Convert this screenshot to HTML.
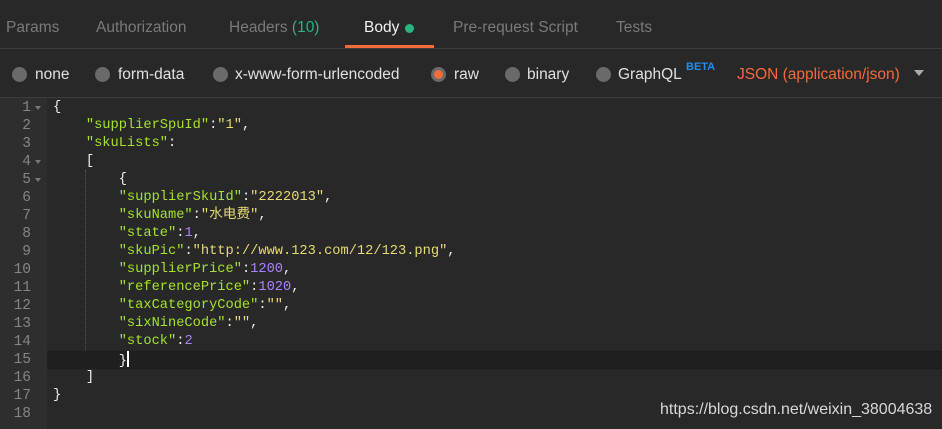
<!DOCTYPE html>
<html><head><meta charset="utf-8"><style>
*{margin:0;padding:0;box-sizing:border-box}
body{width:942px;height:429px;background:#282828;overflow:hidden;position:relative;font-family:"Liberation Sans","Noto Sans CJK SC",sans-serif}
.tabs{position:absolute;left:0;top:0;width:942px;height:49px;border-bottom:1px solid #3c3c3c;background:#282828}
.tab{position:absolute;top:19px;font-size:15.5px;color:#7a7a7a;white-space:nowrap}
.ul{position:absolute;left:345px;top:45px;width:89px;height:3px;background:#f26b3a}
.radios{position:absolute;left:0;top:49px;width:942px;height:49px;border-bottom:1px solid #3c3c3c}
.r{position:absolute;top:17px;font-size:15.5px;color:#e0e0e0;white-space:nowrap}
.dot{position:absolute;top:18px;width:15px;height:15px;border-radius:50%;background:#6a6a6a}
.gut{position:absolute;left:0;top:98px;width:47px;height:331px;background:#2e2e2e}
.code{position:absolute;left:0;top:99px;width:942px;font-family:"Liberation Mono","Noto Sans CJK SC",monospace;font-size:13.7px;line-height:18px}
.ln{height:18px;position:relative;white-space:pre}
.n{position:absolute;left:0;width:31px;text-align:right;color:#858585;font-size:14.5px}
.t{position:absolute;left:53px;color:#f0f0f0}
.k{color:#a6e22e}.s{color:#e6db74}.v{color:#ae81ff}
.fold{position:absolute;left:35px;top:7px;width:0;height:0;border-left:3.5px solid transparent;border-right:3.5px solid transparent;border-top:4px solid #777}
.guide{position:absolute;left:85px;top:170px;height:198px;border-left:1px dotted #555}
</style></head><body>
<div class="tabs">
<div class="tab" style="left:6px">Params</div>
<div class="tab" style="left:96px">Authorization</div>
<div class="tab" style="left:229px">Headers <span style="color:#26b47f">(10)</span></div>
<div class="tab" style="left:364px;color:#f0f0f0">Body</div>
<div style="position:absolute;left:405px;top:24px;width:9px;height:9px;border-radius:50%;background:#26b47f"></div>
<div class="tab" style="left:453px">Pre-request Script</div>
<div class="tab" style="left:616px">Tests</div>
<div class="ul"></div>
</div>
<div class="radios">
<div class="dot" style="left:12px"></div><div class="r" style="left:35px">none</div>
<div class="dot" style="left:95px"></div><div class="r" style="left:118px">form-data</div>
<div class="dot" style="left:213px"></div><div class="r" style="left:235px">x-www-form-urlencoded</div>
<div class="dot" style="left:431px;background:#f26b3a;border:3px solid #6a6a6a"></div><div class="r" style="left:454px">raw</div>
<div class="dot" style="left:505px"></div><div class="r" style="left:527px">binary</div>
<div class="dot" style="left:596px"></div><div class="r" style="left:618px">GraphQL</div>
<div style="position:absolute;left:686px;top:12px;font-size:11px;font-weight:bold;color:#1d8ff0">BETA</div>
<div class="r" style="left:737px;color:#f26b3a">JSON (application/json)</div>
<div style="position:absolute;left:914px;top:21px;border-left:5px solid transparent;border-right:5px solid transparent;border-top:6px solid #aaa"></div>
</div>
<div class="gut"></div>
<div class="guide"></div>
<div class="code">
<div class="ln"><span class="n">1</span><span class="fold"></span><span class="t">{</span></div>
<div class="ln"><span class="n">2</span><span class="t">    <span class="k">"supplierSpuId"</span>:<span class="s">"1"</span>,</span></div>
<div class="ln"><span class="n">3</span><span class="t">    <span class="k">"skuLists"</span>:</span></div>
<div class="ln"><span class="n">4</span><span class="fold"></span><span class="t">    [</span></div>
<div class="ln"><span class="n">5</span><span class="fold"></span><span class="t">        {</span></div>
<div class="ln"><span class="n">6</span><span class="t">        <span class="k">"supplierSkuId"</span>:<span class="s">"2222013"</span>,</span></div>
<div class="ln"><span class="n">7</span><span class="t">        <span class="k">"skuName"</span>:<span class="s">"水电费"</span>,</span></div>
<div class="ln"><span class="n">8</span><span class="t">        <span class="k">"state"</span>:<span class="v">1</span>,</span></div>
<div class="ln"><span class="n">9</span><span class="t">        <span class="k">"skuPic"</span>:<span class="s">"http://www.123.com/12/123.png"</span>,</span></div>
<div class="ln"><span class="n">10</span><span class="t">        <span class="k">"supplierPrice"</span>:<span class="v">1200</span>,</span></div>
<div class="ln"><span class="n">11</span><span class="t">        <span class="k">"referencePrice"</span>:<span class="v">1020</span>,</span></div>
<div class="ln"><span class="n">12</span><span class="t">        <span class="k">"taxCategoryCode"</span>:<span class="s">""</span>,</span></div>
<div class="ln"><span class="n">13</span><span class="t">        <span class="k">"sixNineCode"</span>:<span class="s">""</span>,</span></div>
<div class="ln"><span class="n">14</span><span class="t">        <span class="k">"stock"</span>:<span class="v">2</span></span></div>
<div class="ln"><div style="position:absolute;left:47px;top:0;width:895px;height:18px;background:#1f1f1f"></div><span class="n">15</span><span class="t">        }<span style="display:inline-block;width:2px;height:16px;background:#fff;vertical-align:-3px"></span></span></div>
<div class="ln"><span class="n">16</span><span class="t">    ]</span></div>
<div class="ln"><span class="n">17</span><span class="t">}</span></div>
<div class="ln"><span class="n">18</span></div>
</div>
<div style="position:absolute;left:660px;top:401px;font-size:16px;color:#d8d8d8">https://blog.csdn.net/weixin_38004638</div>
</body></html>
